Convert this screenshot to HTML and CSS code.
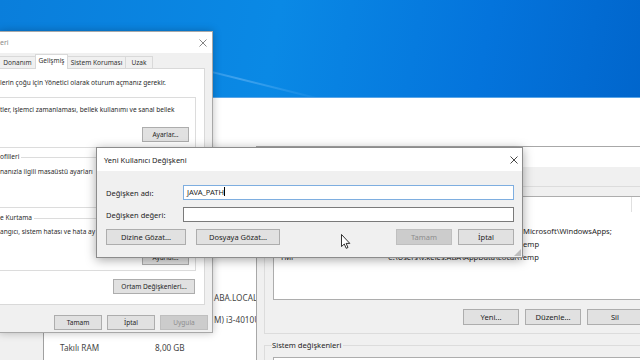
FILE: index.html
```html
<!DOCTYPE html>
<html lang="tr">
<head>
    <meta charset="UTF-8">
    <meta name="viewport" content="width=device-width, initial-scale=1.0">
    <title>Yeni Kullanıcı Değişkeni</title>
    <link rel="stylesheet" href="styles.css">
</head>
<body>
  <div class="desktop">
    <!-- arka plandaki Sistem penceresi -->
    <div class="win syswin">
      <div class="sys-side"></div>
      <div class="sys-main">
        <div class="sys-row wide"><span class="sys-key"></span><span class="sys-val">ABA.LOCAL</span></div>
        <div class="sys-row wide"><span class="sys-key"></span><span class="sys-val">M) i3-4010U CPU @ 1.70GHz</span></div>
        <div class="sys-row ram"><span class="sys-key">Takılı RAM</span><span class="sys-val">8,00 GB</span></div>
      </div>
    </div>

    <!-- Sistem Özellikleri -->
    <div class="win props">
      <div class="titlebar">
        <span class="title">eri</span>
        <svg class="close" width="8" height="8" viewBox="0 0 8 8"><path d="M0.5 0.5L7.5 7.5M7.5 0.5L0.5 7.5"/></svg>
      </div>
      <div class="tabs">
        <span class="tab t-hw">Donanım</span>
        <span class="tab t-adv active">Gelişmiş</span>
        <span class="tab t-prot">Sistem Koruması</span>
        <span class="tab t-rem">Uzak</span>
      </div>
      <div class="tabpage">
        <p class="note">lerin çoğu için Yönetici olarak oturum açmanız gerekir.</p>
        <fieldset class="group g-perf">
          <p>tler, işlemci zamanlaması, bellek kullanımı ve sanal bellek</p>
          <button class="btn">Ayarlar...</button>
        </fieldset>
        <fieldset class="group g-prof">
          <legend>ofilleri</legend>
          <p>nanızla ilgili masaüstü ayarları</p>
          <div class="btn-slot"></div>
        </fieldset>
        <fieldset class="group g-boot">
          <legend>e Kurtama</legend>
          <p>angıcı, sistem hatası ve hata ay</p>
          <button class="btn">Ayarlar...</button>
        </fieldset>
        <button class="btn btn-env">Ortam Değişkenleri...</button>
      </div>
      <div class="footer">
        <button class="btn">Tamam</button>
        <button class="btn">İptal</button>
        <button class="btn disabled">Uygula</button>
      </div>
    </div>

    <!-- Ortam Değişkenleri -->
    <div class="win env">
      <div class="titlebar"><span class="title">Ortam Değişkenleri</span></div>
      <div class="env-body">
        <fieldset class="group env-group">
          <legend>v.keles için kullanıcı değişkenleri</legend>
          <div class="list">
            <div class="list-head"><span class="col-name">Değişken</span><span class="col-val">Değer</span></div>
            <div class="list-row"></div>
            <!-- pencerenin altında kalan kısımlar görünmüyor -->
            <div class="list-row"><span class="col-name"></span><span class="col-val cut">Microsoft\WindowsApps;</span></div>
            <div class="list-row"><span class="col-name"></span><span class="col-val cut">emp</span></div>
            <div class="list-row"><span class="col-name">TMP</span><span class="col-val">C:\Users\v.keles.ABA\AppData\Local\Temp</span></div>
          </div>
          <div class="btn-row">
            <button class="btn">Yeni...</button>
            <button class="btn">Düzenle...</button>
            <button class="btn">Sil</button>
          </div>
        </fieldset>
        <fieldset class="group env-group sys-group">
          <legend>Sistem değişkenleri</legend>
          <div class="list"></div>
        </fieldset>
      </div>
    </div>

    <!-- Yeni Kullanıcı Değişkeni -->
    <div class="win newvar">
      <div class="titlebar">
        <span class="title">Yeni Kullanıcı Değişkeni</span>
        <svg class="close" width="8" height="8" viewBox="0 0 8 8"><path d="M0.5 0.5L7.5 7.5M7.5 0.5L0.5 7.5"/></svg>
      </div>
      <div class="nv-body">
        <div class="field">
          <label>Değişken adı:</label>
          <div class="input focused">JAVA_PATH<span class="caret"></span></div>
        </div>
        <div class="field">
          <label>Değişken değeri:</label>
          <div class="input"></div>
        </div>
        <div class="nv-buttons">
          <button class="btn b-dir">Dizine Gözat...</button>
          <button class="btn b-file">Dosyaya Gözat...</button>
          <button class="btn b-ok disabled">Tamam</button>
          <button class="btn b-cancel">İptal</button>
        </div>
      </div>
    </div>

    <svg class="cursor" width="10" height="15" viewBox="0 0 10 15">
      <path d="M0.5 0.5V12.5L3.3 10L5.2 14.3L7 13.5L5.1 9.4H8.8Z"/>
    </svg>
  </div>
</body>
</html>
```

FILE: styles.css
```css
* {
  margin: 0;
  padding: 0;
  box-sizing: border-box;
}

body {
  width: 640px;
  height: 360px;
  overflow: hidden;
  font-family: "Noto Sans", "Open Sans", sans-serif;
  color: #1e1e1e;
}

.desktop {
  position: relative;
  width: 640px;
  height: 360px;
  overflow: hidden;
  background: linear-gradient(100deg, #0a7edb 0%, #0a89e5 40%, #0474dc 70%, #0062c8 100%);
}

/* ışık huzmesi */
.desktop::before {
  content: "";
  position: absolute;
  left: 150px;
  top: 78px;
  width: 180px;
  height: 2px;
  background: linear-gradient(90deg, transparent, rgba(160, 210, 255, 0.35), transparent);
  transform: rotate(14deg);
}

.win {
  position: absolute;
}

.titlebar {
  display: flex;
  align-items: center;
  justify-content: space-between;
  background: #fff;
  white-space: nowrap;
}

.close {
  stroke: #333;
  stroke-width: 0.9;
  fill: none;
}

.btn {
  font: inherit;
  height: 15px;
  line-height: 13px;
  background: #e1e1e1;
  border: 1px solid #adadad;
  color: #1e1e1e;
  padding: 0 6px;
  white-space: nowrap;
}

.btn.disabled {
  background: #cccccc;
  border-color: #bfbfbf;
  color: #8d8d8d;
}

.group {
  border: 1px solid #dcdcdc;
}

.group legend {
  line-height: 10px;
  padding: 0 2px 0 0;
}

/* Sistem penceresi */
.syswin {
  left: 0;
  top: 97px;
  width: 640px;
  height: 263px;
  display: flex;
  background: #fff;
  border-top: 1px solid #5aa6e8;
}

.sys-side {
  width: 44px;
  background: #f0f0f0;
  border-right: 1px solid #a0a0a0;
}

.sys-main {
  padding: 194px 0 0 16px;
  font-size: 8.2px;
  color: #444;
}

.sys-row {
  display: flex;
  line-height: 12px;
  white-space: nowrap;
  margin-top: 10px;
}

.sys-row:first-child {
  margin-top: 0;
}

.sys-row.ram {
  margin-top: 16px;
}

.sys-key {
  width: 95px;
}

.sys-row.wide .sys-key {
  width: 154px;
}

/* Sistem Özellikleri */
.props {
  left: -1px;
  top: 31px;
  width: 214px;
  height: 302px;
  display: flex;
  flex-direction: column;
  background: #f0f0f0;
  border: 1px solid #a8a8a8;
  box-shadow: 0 0 8px rgba(0, 0, 0, 0.25);
  font-size: 6.55px;
}

.props .titlebar {
  height: 21px;
  padding-right: 5px;
  color: #8a8a8a;
  font-size: 7px;
}

.props .close {
  stroke: #777;
}

.tabs {
  display: flex;
  align-items: flex-end;
  height: 15px;
  position: relative;
  z-index: 1;
  white-space: nowrap;
}

.tab {
  height: 12px;
  line-height: 11px;
  text-align: center;
  background: #f0f0f0;
  border: 1px solid #d9d9d9;
  border-bottom: none;
  margin-right: -1px;
  color: #333;
}

.tab.active {
  height: 15px;
  line-height: 12px;
  margin-bottom: -1px;
  background: #fff;
}

.t-hw { width: 37px; margin-left: -1px; }
.t-adv { width: 33px; }
.t-prot { width: 59px; }
.t-rem { width: 28px; }

.tabpage {
  width: 205px;
  height: 237px;
  display: flex;
  flex-direction: column;
  padding-right: 8px;
  background: #fff;
  border: 1px solid #d9d9d9;
  border-left: none;
  white-space: nowrap;
  color: #2a2a2a;
}

.note {
  margin-top: 9px;
  line-height: 10px;
}

.tabpage .group {
  display: flex;
  flex-direction: column;
  border-left: none;
  padding: 0 6px 5px 0;
  overflow: hidden;
}

.tabpage .group p {
  line-height: 10px;
}

.tabpage .group .btn,
.btn-slot {
  align-self: flex-end;
  width: 47px;
  height: 15px;
}

.g-perf {
  margin-top: 9px;
  padding-top: 7px !important;
}

.g-perf .btn {
  margin-top: 12px;
}

.g-prof {
  margin-top: 4px;
}

.g-prof p {
  margin-top: 5px;
}

.g-prof .btn-slot {
  margin-top: 10px;
}

.g-boot {
  margin-top: 5px;
}

.g-boot p {
  margin-top: 4px;
}

.g-boot .btn {
  margin-top: 13px;
}

.btn-env {
  align-self: flex-end;
  margin: 8px 1px 0 0;
  width: 82px;
}

.footer {
  display: flex;
  justify-content: flex-end;
  gap: 5px;
  padding: 10px 4px 0 0;
}

.footer .btn {
  width: 48px;
}

/* Ortam Değişkenleri */
.env {
  left: 256px;
  top: 146px;
  width: 410px;
  height: 240px;
  background: #f0f0f0;
  border: 1px solid #a8a8a8;
  font-size: 7.6px;
}

.env .titlebar {
  height: 20px;
  padding-left: 8px;
}

.env-body {
  padding: 14px 13px 0 7px;
}

.env-group {
  padding: 5px 8px 8px 8px;
}

.env-group legend {
  margin-left: -1px;
  padding: 0 2px 0 0;
}

.list {
  height: 104px;
  background: #fff;
  border: 1px solid #adadad;
  white-space: nowrap;
  overflow: hidden;
}

.list-head,
.list-row {
  display: flex;
  height: 13px;
  line-height: 13px;
  padding-left: 6px;
}

.list-head {
  height: 15px;
  line-height: 15px;
  color: #444;
}

.list-head .col-val {
  width: 244px;
  border-right: 1px solid #e0e0e0;
}

.col-name {
  width: 108px;
  flex-shrink: 0;
}

.col-val.cut {
  margin-left: 135px;
}

.btn-row {
  display: flex;
  justify-content: flex-end;
  gap: 6px;
  margin-top: 9px;
}

.btn-row .btn {
  width: 56px;
  height: 16px;
}

.sys-group {
  margin-top: 6px;
  padding-top: 7px;
}

.sys-group .list {
  height: 40px;
}

/* Yeni Kullanıcı Değişkeni */
.newvar {
  left: 96px;
  top: 147px;
  width: 427px;
  height: 111px;
  display: flex;
  flex-direction: column;
  background: #f0f0f0;
  border: 1px solid #8c8c8c;
  box-shadow: 0 2px 10px rgba(0, 0, 0, 0.35);
  font-size: 7.5px;
}

.newvar::after {
  content: "";
  position: absolute;
  right: 1px;
  bottom: 1px;
  width: 7px;
  height: 7px;
  background: radial-gradient(circle, #a0a0a0 0.6px, transparent 0.9px) 0 0 / 2px 2px;
  clip-path: polygon(100% 0, 100% 100%, 0 100%);
}

.newvar .titlebar {
  height: 23px;
  padding: 0 4px 0 7px;
}

.nv-body {
  padding: 14px 8px 0 9px;
}

.field {
  display: flex;
  align-items: center;
  margin-bottom: 7px;
}

.field label {
  width: 77px;
}

.input {
  flex: 1;
  height: 15px;
  line-height: 13px;
  padding-left: 3px;
  background: #fff;
  border: 1px solid #7a7a7a;
}

.input.focused {
  border-color: #7eaee0;
}

.caret {
  display: inline-block;
  width: 1px;
  height: 9px;
  background: #000;
  vertical-align: -1px;
}

.nv-buttons {
  display: flex;
  margin-top: 3px;
}

.nv-buttons .btn {
  height: 16px;
}

.b-dir { width: 80px; }
.b-file { width: 84px; margin-left: 10px; }
.b-ok { width: 56px; margin-left: auto; }
.b-cancel { width: 56px; margin-left: 6px; }

.cursor {
  position: absolute;
  left: 341px;
  top: 234px;
  fill: #fff;
  stroke: #000;
  stroke-width: 0.8;
}
```
